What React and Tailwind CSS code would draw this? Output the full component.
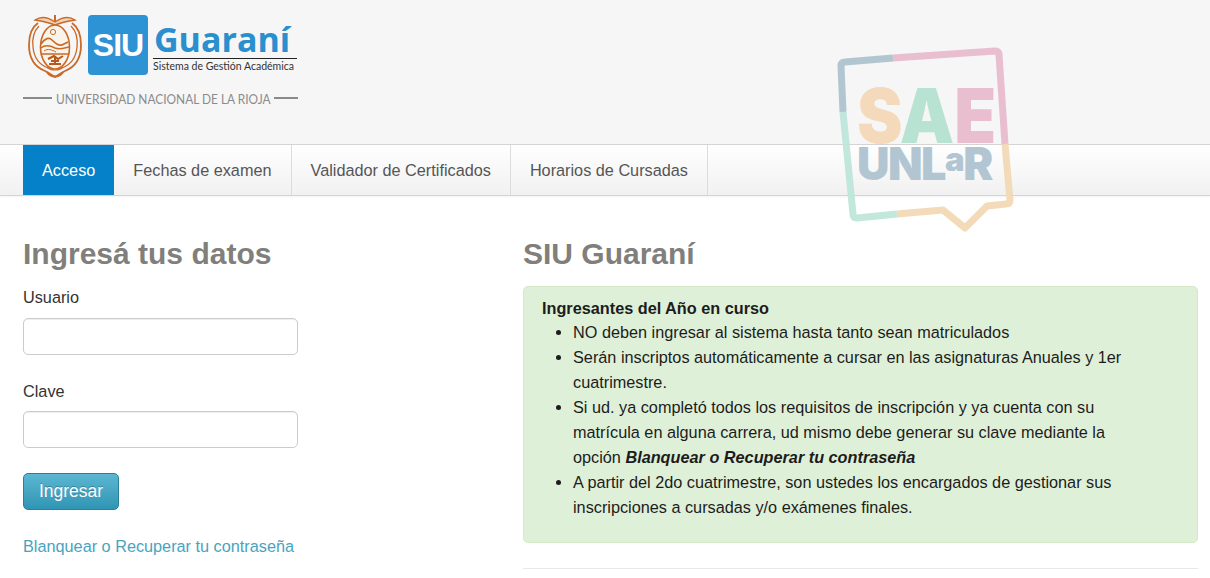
const sans = { fontFamily: '"Liberation Sans", Arial, sans-serif' };

function Crest() {
  return (
    <svg width="56" height="68" viewBox="0 0 56 68" fill="none" stroke="#c96a28" strokeWidth="1.3" className="shrink-0">
      <path d="M10 12 C4 16 1 24 1 34 C1 47 7 56 17 60 C21 62 24 64 27 66 C30 64 33 62 37 60 C47 56 53 47 53 34 C53 24 50 16 44 12" strokeWidth="1.8" />
      <path d="M11 15 C6 20 4 27 5 36 C6 47 12 54 20 57" />
      <path d="M43 15 C48 20 50 27 49 36 C48 47 42 54 34 57" />
      <path d="M7 9 C13 5 20 6 27 11 C34 6 41 5 47 9 C41 10 34 11 27 14 C20 11 13 10 7 9Z" fill="#f0d3b4" strokeWidth="1.4" />
      <path d="M27 4 V11" strokeWidth="2" />
      <ellipse cx="27" cy="36" rx="14.5" ry="22" fill="#faf3ea" strokeWidth="1.6" />
      <circle cx="25" cy="21" r="2.6" strokeWidth="1" />
      <path d="M13 33 C17 27 21 26 24 29 C27 32 31 36 36 33 L40 31" strokeWidth="1.7" />
      <path d="M13 37 C18 33 23 35 27 37 C32 39 36 37 41 36" strokeWidth="1.5" />
      <path d="M16 40 C20 37 24 39 28 41" strokeWidth="1" />
      <path d="M12.6 43 H41.4" strokeWidth="1.5" />
      <path d="M20 48 L26 45 L30 48 L35 45 M27 46 V53 M21 53 H33 M23 50 L31 50" strokeWidth="2" stroke="#b8581b" />
      <path d="M19 56 C23 60 31 60 35 56" strokeWidth="1.2" />
      <path d="M19 61 C23 67 31 67 35 61" strokeWidth="2.2" />
    </svg>
  );
}

function Logo() {
  return (
    <div className="w-[275px] ml-[23px] pt-[11px]">
      <div className="flex h-[67px] pl-[5px]">
        <Crest />
        <div className="ml-[4px] mt-[4px] w-[60px] h-[60px] rounded-[4px] bg-[#2d93d5] flex items-center justify-center">
          <span className="text-white font-bold text-[32px] tracking-[-1px]" style={sans}>SIU</span>
        </div>
        <div className="ml-[5px] w-[144px] flex flex-col">
          <div className="h-[47px] pt-[9px] pl-[1px] text-[#2a8fcf] font-bold text-[34px] leading-[38px] whitespace-nowrap" style={{ fontFamily: '"Open Sans", sans-serif' }}>Guaraní</div>
          <div className="border-t-[1.5px] border-[#222] text-[10.5px] leading-[14px] text-[#333] whitespace-nowrap" style={{ fontFamily: 'Lato, sans-serif' }}>Sistema de Gestión Académica</div>
        </div>
      </div>
      <div className="flex items-center gap-[4px] mt-[8px]">
        <div className="h-[2px] w-[29px] shrink-0 bg-[#8a8a8a]" />
        <div className="w-[214px] shrink-0 overflow-visible">
          <span className="inline-block origin-left scale-x-[0.85] text-[14px] leading-[16px] text-[#8b8b8b] whitespace-nowrap" style={{ fontFamily: 'Lato, sans-serif' }}>UNIVERSIDAD NACIONAL DE LA RIOJA</span>
        </div>
        <div className="h-[2px] w-[24px] shrink-0 bg-[#8a8a8a]" />
      </div>
    </div>
  );
}

function Watermark() {
  return (
    <div className="absolute left-[830px] top-[40px] w-[190px] h-[195px] opacity-95 pointer-events-none">
      <svg width="190" height="195" viewBox="830 40 190 195" fill="none" strokeWidth="7" strokeLinejoin="round" className="absolute inset-0">
        <path d="M843 112 L841 66 Q841 62 845 62 L893 58" stroke="#aec4d0" />
        <path d="M893 58 L995 51 Q999 51 999 55 L1005 144" stroke="#e9bccd" />
        <path d="M1005 144 L1010 200 Q1010 204 1006 204 L987 206 L965 228 L943 210 L897 214" stroke="#f3dab6" />
        <path d="M897 214 L857 218 Q853 218 853 214 L843 112" stroke="#bfe6da" />
      </svg>
      <div className="absolute left-[27px] top-[47px] w-[140px] font-black" style={{ fontFamily: 'Inter, sans-serif' }}>
        <div className="flex origin-left scale-x-[0.9] text-[76px] leading-[56px] tracking-[-3px]">
          <span className="text-[#f4d8b7]">S</span>
          <span className="text-[#b5e3d2]">A</span>
          <span className="text-[#e9bccd] ml-[3px]">E</span>
        </div>
        <div className="flex items-start mt-[4px] text-[#aec4d0] text-[45px] leading-[33px] tracking-[-1.5px]">
          <span>UNL</span>
          <span className="text-[33px] leading-[24px]">a</span>
          <span>R</span>
        </div>
      </div>
    </div>
  );
}

function Tab({ children, active }) {
  return (
    <div className={active
      ? "h-full px-[19px] pt-[1px] flex items-center bg-[#0581c9] text-white"
      : "h-full px-[19px] pt-[1px] flex items-center border-r border-[#dcdcdc] text-[#555]"}>
      {children}
    </div>
  );
}

function Input() {
  return <div className="w-[275px] h-[37px] rounded-[5px] border border-[#ccc] bg-white shadow-[inset_0_1px_1px_rgba(0,0,0,0.07)]" />;
}

export default function App() {
  return (
    <div className="relative w-[1210px] h-[578px] overflow-hidden bg-white text-[16.25px] text-[#333]" style={sans}>
      <header className="h-[144px] bg-[#f6f6f6]">
        <Logo />
      </header>
      <nav className="h-[52px] pl-[23px] flex border-y border-[#d4d4d4] bg-gradient-to-b from-white to-[#f1f1f1] shadow-[0_1px_2px_rgba(0,0,0,0.05)]">
        <Tab active>Acceso</Tab>
        <Tab>Fechas de examen</Tab>
        <Tab>Validador de Certificados</Tab>
        <Tab>Horarios de Cursadas</Tab>
      </nav>
      <main className="flex pl-[23px] pr-[12px]">
        <section className="w-[500px] shrink-0">
          <h2 className="mt-[40px] text-[30px] leading-[36px] font-bold text-[#807f7c]">Ingresá tus datos</h2>
          <div className="mt-[13px] leading-[25px] text-[#333]">Usuario</div>
          <div className="mt-[8px]"><Input /></div>
          <div className="mt-[24px] leading-[25px]">Clave</div>
          <div className="mt-[7px]"><Input /></div>
          <div className="mt-[25px] w-[96px] h-[37px] rounded-[5px] border border-[#2a7f99] bg-gradient-to-b from-[#5bb7d2] to-[#2f95b4] text-[17.5px] text-white flex items-center justify-center [text-shadow:0_-1px_0_rgba(0,0,0,0.25)]">Ingresar</div>
          <div className="mt-[24px] leading-[25px] text-[#49a3bf]">Blanquear o Recuperar tu contraseña</div>
        </section>
        <section className="flex-1 min-w-0">
          <h2 className="mt-[40px] text-[30px] leading-[36px] font-bold text-[#807f7c]">SIU Guaraní</h2>
          <div className="mt-[14px] h-[257px] rounded-[5px] border border-[#d6e9c6] bg-[#dff0d8] pt-[9px] pl-[18px] pr-[60px] leading-[25px] text-[#1c1c1c]">
            <div className="font-bold -mb-[1px]">Ingresantes del Año en curso</div>
            <ul className="list-disc pl-[31px]">
              <li>NO deben ingresar al sistema hasta tanto sean matriculados</li>
              <li>Serán inscriptos automáticamente a cursar en las asignaturas Anuales y 1er cuatrimestre.</li>
              <li>Si ud. ya completó todos los requisitos de inscripción y ya cuenta con su matrícula en alguna carrera, ud mismo debe generar su clave mediante la opción <b><i>Blanquear o Recuperar tu contraseña</i></b></li>
              <li>A partir del 2do cuatrimestre, son ustedes los encargados de gestionar sus inscripciones a cursadas y/o exámenes finales.</li>
            </ul>
          </div>
          <div className="mt-[25px] border-t border-[#e8e8e8]" />
        </section>
      </main>
      <Watermark />
    </div>
  );
}
